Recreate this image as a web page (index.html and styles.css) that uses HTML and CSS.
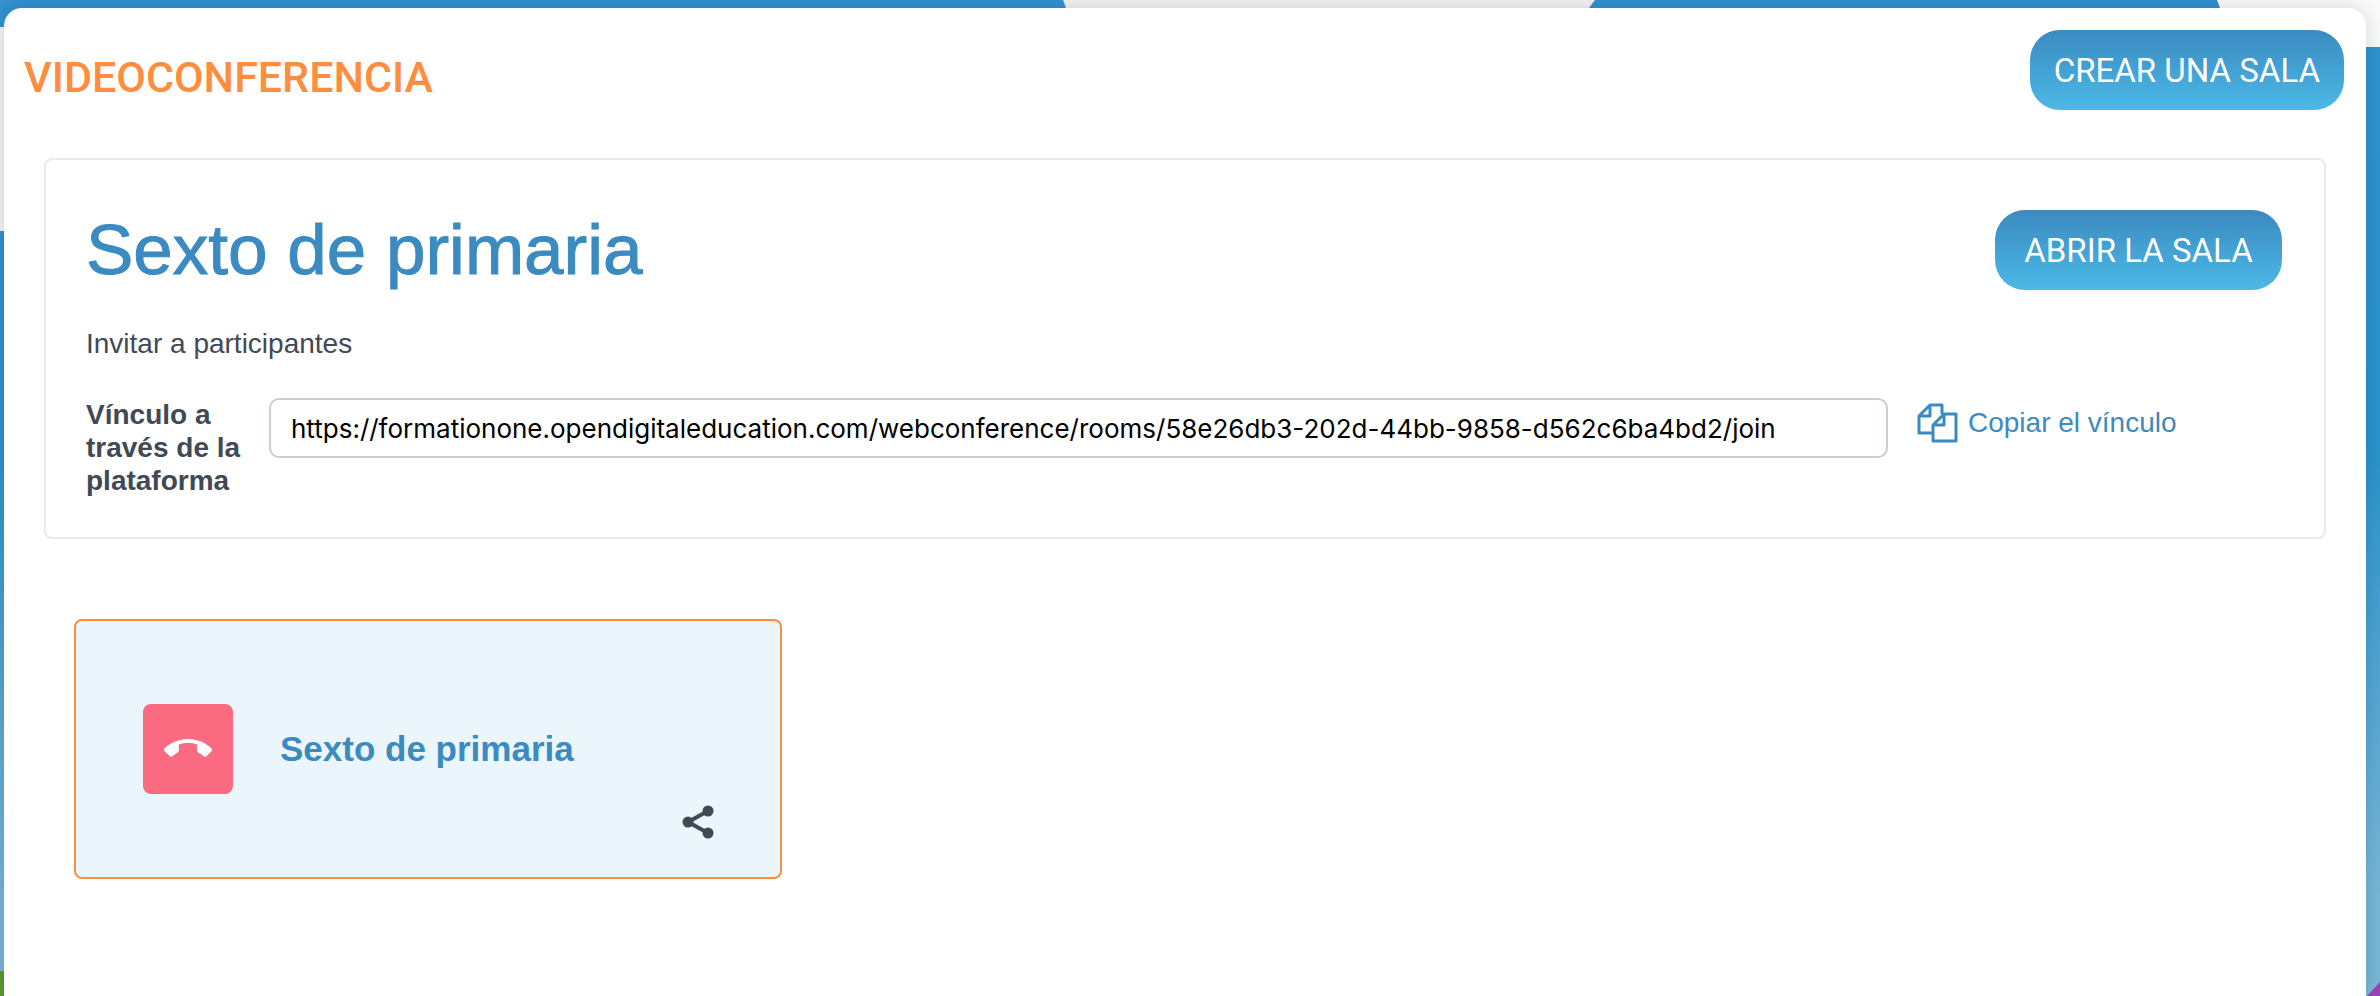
FILE: index.html
```html
<!DOCTYPE html>
<html lang="es">
<head>
    <meta charset="UTF-8">
    <meta name="viewport" content="width=device-width, initial-scale=1.0">
    <title>Videoconferencia</title>
    <link rel="stylesheet" href="styles.css">
</head>
<body>

    <!-- Background shapes -->
    <div class="backdrop">
        <svg class="shape-top" width="540" height="8" viewBox="0 0 540 8" aria-hidden="true">
            <path d="M0 0h532l-6 8H3z" fill="#f2f2f2"/>
        </svg>
        <svg class="shape-corner" width="163" height="47" viewBox="0 0 163 47" aria-hidden="true">
            <path d="M0 0h163v47H30L3 8z" fill="#fafafa"/>
        </svg>
        <div class="shape-left"></div>
        <div class="shape-hill"></div>
        <svg class="shape-purple" width="14" height="14" viewBox="0 0 14 14" aria-hidden="true">
            <path d="M14 0v14H1z" fill="#9b45b5"/>
        </svg>
    </div>

    <main class="page">
        <header class="page-header">
            <h1>VIDEOCONFERENCIA</h1>
            <button type="button" class="btn">CREAR UNA SALA</button>
        </header>

        <!-- Selected room -->
        <section class="room-panel">
            <div class="room-header">
                <h2>Sexto de primaria</h2>
                <button type="button" class="btn">ABRIR LA SALA</button>
            </div>
            <p class="invite">Invitar a participantes</p>
            <div class="link-row">
                <label for="roomLink">Vínculo a través de la plataforma</label>
                <input type="text" id="roomLink" readonly value="https://formationone.opendigitaleducation.com/webconference/rooms/58e26db3-202d-44bb-9858-d562c6ba4bd2/join">
                <a href="#" class="copy-link">
                    <svg width="41" height="40" viewBox="0 0 41 40" fill="none" stroke="currentColor" stroke-width="3" stroke-linejoin="round" aria-hidden="true">
                        <path d="M15 30H2V13L13 2h12v9M13 2v11H2"/>
                        <path d="M27 11h12v27H16V22zM27 11v11H16"/>
                    </svg>
                    <span>Copiar el vínculo</span>
                </a>
            </div>
        </section>

        <!-- Room list -->
        <section class="rooms">
            <article class="room-card">
                <button type="button" class="hangup" aria-label="Colgar">
                    <svg width="48" height="48" viewBox="0 0 24 24" fill="currentColor" aria-hidden="true">
                        <path d="M12 9c-1.600 0-3.150.250-4.600.720v3.100c0 .390-.230.740-.560.900-.980.490-1.870 1.120-2.660 1.850-.180.180-.430.280-.700.280-.280 0-.530-.110-.710-.290L.290 13.080c-.180-.170-.290-.420-.290-.700 0-.280.110-.530.290-.710C3.340 8.780 7.460 7 12 7s8.660 1.780 11.710 4.670c.180.180.290.430.290.710 0 .280-.110.530-.290.710l-2.480 2.480c-.180.180-.430.290-.710.290-.270 0-.520-.110-.700-.280-.790-.740-1.690-1.360-2.670-1.850-.330-.160-.560-.500-.560-.900v-3.100C15.150 9.250 13.600 9 12 9z"/>
                    </svg>
                </button>
                <h3>Sexto de primaria</h3>
                <button type="button" class="share" aria-label="Compartir">
                    <svg width="32" height="34" viewBox="0 0 32 34" fill="currentColor" aria-hidden="true">
                        <path d="M26 6L6 17l20 11" fill="none" stroke="currentColor" stroke-width="4"/>
                        <circle cx="26" cy="6" r="5.500"/>
                        <circle cx="6" cy="17" r="5.500"/>
                        <circle cx="26" cy="28" r="5.500"/>
                    </svg>
                </button>
            </article>
        </section>
    </main>

</body>
</html>
```
FILE: styles.css
```css
* {
    box-sizing: border-box;
}
body {
    font-family: "Liberation Sans", Arial, sans-serif;
    font-size: 28px;
    margin: 0;
    padding: 8px 14px 0 4px;
    min-height: 100vh;
    display: flex;
    color: #414955;
    background: linear-gradient(#3192d0, #2a93cc 45%, #78b6d8 90%);
    overflow: hidden;
}
h1, h2, h3, p {
    margin: 0;
}
button {
    font-family: inherit;
    border: none;
    cursor: pointer;
}
.backdrop {
    position: absolute;
    inset: 0;
    z-index: -1;
    overflow: hidden;
}
.backdrop > * {
    position: absolute;
}
.shape-top {
    top: 0;
    left: 1063px;
}
.shape-corner {
    top: 0;
    right: 0;
}
.shape-left {
    top: 27px;
    left: 0;
    width: 30px;
    height: 204px;
    background: #f4f4f4;
}
.shape-hill {
    bottom: 0;
    left: 0;
    width: 30px;
    height: 25px;
    background: #5c9a30;
}
.shape-purple {
    right: 0;
    bottom: 0;
}
.page {
    flex: 1;
    background: #fff;
    border-radius: 18px 18px 0 0;
    box-shadow: 0 0 20px rgba(0, 0, 0, 0.15);
    padding: 22px 22px 0 20px;
}
.page-header {
    display: flex;
    justify-content: space-between;
    align-items: flex-start;
}
h1 {
    font-family: Roboto, sans-serif;
    font-size: 43px;
    font-weight: 500;
    line-height: 94px;
    color: #ff8d3e;
}
.btn {
    font-family: Roboto, sans-serif;
    font-size: 33px;
    min-width: 287px;
    height: 80px;
    padding: 0 24px;
    color: #fff;
    border-radius: 30px;
    background: linear-gradient(#3b8ac0, #4bb9e6);
}
.room-panel {
    margin: 34px 18px 0 20px;
    padding: 50px 42px 40px 40px;
    border: 2px solid #e9e9ef;
    border-radius: 8px;
}
.room-header {
    display: flex;
    justify-content: space-between;
    align-items: center;
}
h2 {
    font-size: 71px;
    font-weight: normal;
    line-height: 80px;
    color: #3b8ac0;
    -webkit-text-stroke: 1px #3b8ac0;
}
.invite {
    margin-top: 38px;
    line-height: 32px;
}
.link-row {
    display: flex;
    align-items: flex-start;
    margin-top: 38px;
}
label {
    width: 183px;
    padding-right: 24px;
    font-weight: bold;
    line-height: 33px;
}
input[type="text"] {
    flex: 1;
    height: 60px;
    padding: 0 20px;
    border: 2px solid #c8ccd5;
    border-radius: 10px;
    font-family: Inter, sans-serif;
    font-size: 26px;
    color: #000;
}
.copy-link {
    display: flex;
    align-items: center;
    gap: 10px;
    width: 365px;
    margin-left: 29px;
    padding-top: 5px;
    color: #3b8ac0;
    text-decoration: none;
}
.rooms {
    padding: 80px 50px;
}
.room-card {
    position: relative;
    display: flex;
    align-items: center;
    gap: 47px;
    width: 708px;
    height: 260px;
    padding: 0 67px;
    background: #eaf6fc;
    border: 2px solid #ff8d3e;
    border-radius: 8px;
}
.hangup {
    display: flex;
    align-items: center;
    justify-content: center;
    width: 90px;
    height: 90px;
    padding: 0;
    color: #fff;
    background: #fa6a80;
    border-radius: 8px;
}
h3 {
    font-size: 35px;
    color: #3b8ac0;
}
.share {
    position: absolute;
    right: 66px;
    bottom: 38px;
    display: flex;
    padding: 0;
    color: #414955;
    background: none;
}
```
